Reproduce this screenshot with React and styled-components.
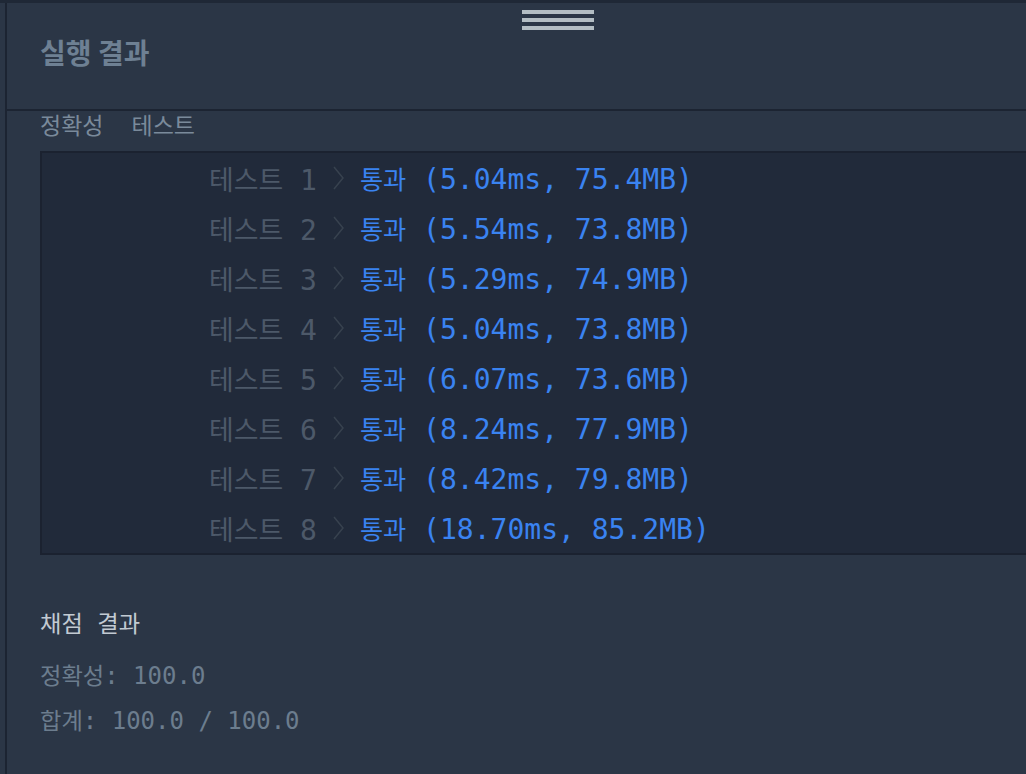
import React from 'react';
import styled, { createGlobalStyle } from 'styled-components';

const GlobalStyle = createGlobalStyle`
  html, body {
    margin: 0;
    padding: 0;
    background: #2b3646;
    overflow: hidden;
  }
`;

const Page = styled.div`
  width: 1026px;
  height: 774px;
  display: flex;
  flex-direction: column;
  background: #2b3646;
`;

const EditorEdge = styled.div`
  height: 3px;
  flex-shrink: 0;
  background: #1f2836;
`;

const Panel = styled.div`
  flex: 1;
  margin-left: 5px;
  border-left: 2px solid #1c2432;
  display: flex;
  flex-direction: column;
`;

const Header = styled.div`
  height: 106px;
  border-bottom: 2px solid #1c2432;
  display: flex;
  flex-direction: column;
`;

const Handle = styled.div`
  margin-left: 515px;
  padding-top: 7px;
  width: 72px;
  display: flex;
  flex-direction: column;
  gap: 4px;
`;

const HandleBar = styled.span`
  display: block;
  height: 4px;
  background: #b3bdc3;
`;

const Title = styled.h2`
  margin: 8px 0 0 33px;
  font-family: 'Noto Sans CJK KR', 'Noto Sans', sans-serif;
  font-weight: 700;
  font-size: 28px;
  line-height: 28px;
  color: #6e8093;
`;

const Tabs = styled.div`
  display: flex;
  gap: 28px;
  margin-left: 33px;
  height: 40px;
`;

const Tab = styled.span`
  font-family: 'Noto Sans CJK KR', 'Noto Sans', sans-serif;
  font-size: 23px;
  line-height: 26px;
  color: #7a8a9b;
`;

const ResultBox = styled.div`
  margin-left: 33px;
  margin-right: -10px;
  background: #212a3a;
  border: 2px solid #1b2230;
  display: flex;
  flex-direction: column;
`;

const Row = styled.div`
  height: 50px;
  display: flex;
  align-items: center;
  padding-left: 167px;
  font-family: 'DejaVu Sans Mono', 'Noto Sans CJK KR', monospace;
  font-size: 28px;
  white-space: pre;
`;

const Ko = styled.span`
  font-family: 'Noto Sans CJK KR', sans-serif;
  font-size: ${(p) => p.$scale || 0.96}em;
`;

const Label = styled.span`
  color: #4d5969;
`;

const Chevron = styled.svg`
  margin: 0 16px 0 16px;
  flex-shrink: 0;
`;

const Outcome = styled.span`
  color: #3a83f1;
`;

const Summary = styled.div`
  margin: 45px 0 0 33px;
  font-family: 'DejaVu Sans Mono', 'Noto Sans CJK KR', monospace;
  font-size: 24px;
  white-space: pre;
`;

const SummaryTitle = styled.div`
  line-height: 44px;
  margin-bottom: 7px;
  color: #c2cad2;
`;

const SummaryLine = styled.div`
  line-height: 43px;
  color: #6c7d8e;
`;

const results = [
  ['5.04ms', '75.4MB'],
  ['5.54ms', '73.8MB'],
  ['5.29ms', '74.9MB'],
  ['5.04ms', '73.8MB'],
  ['6.07ms', '73.6MB'],
  ['8.24ms', '77.9MB'],
  ['8.42ms', '79.8MB'],
  ['18.70ms', '85.2MB'],
];

const App = () => (
  <Page>
    <GlobalStyle />
    <EditorEdge />
    <Panel>
      <Header>
        <Handle>
          <HandleBar />
          <HandleBar />
          <HandleBar />
        </Handle>
        <Title>실행 결과</Title>
      </Header>
      <Tabs>
        <Tab>정확성</Tab>
        <Tab>테스트</Tab>
      </Tabs>
      <ResultBox>
        {results.map(([time, mem], i) => (
          <Row key={i}>
            <Label>
              <Ko>테스트</Ko> {i + 1}
            </Label>
            <Chevron width="11" height="24" viewBox="0 0 11 24">
              <polyline
                points="1,1 10,12 1,23"
                fill="none"
                stroke="#38424f"
                strokeWidth="1.5"
              />
            </Chevron>
            <Outcome>
              <Ko $scale={0.9}>통과</Ko> ({time}, {mem})
            </Outcome>
          </Row>
        ))}
      </ResultBox>
      <Summary>
        <SummaryTitle>
          <Ko $scale={0.97}>채점</Ko> <Ko $scale={0.97}>결과</Ko>
        </SummaryTitle>
        <SummaryLine>
          <Ko $scale={0.97}>정확성</Ko>: 100.0
        </SummaryLine>
        <SummaryLine>
          <Ko $scale={0.97}>합계</Ko>: 100.0 / 100.0
        </SummaryLine>
      </Summary>
    </Panel>
  </Page>
);

export default App;
